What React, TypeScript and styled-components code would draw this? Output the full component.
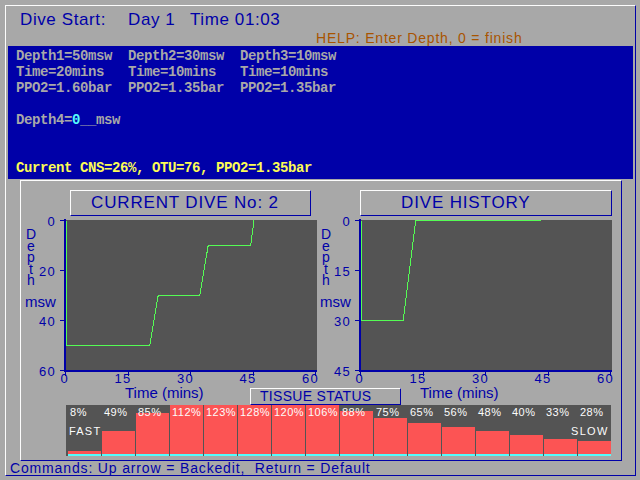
import styled, { createGlobalStyle } from "styled-components";

const BLUE = "#0000a8";
const GRAY = "#a8a8a8";
const DARK = "#545454";
const WHITE = "#fcfcfc";
const GREEN = "#54fc54";
const RED = "#fc5454";
const CYAN = "#54fcfc";
const YELLOW = "#fcfc54";
const ORANGE = "#a85400";

const GlobalStyle = createGlobalStyle`
  body {
    margin: 0;
    background: ${GRAY};
  }
`;

const Screen = styled.div`
  width: 640px;
  height: 480px;
  box-sizing: border-box;
  padding: 5px;
  background: ${GRAY};
  font-family: "Liberation Sans", Arial, sans-serif;
  overflow: hidden;
`;

const Frame = styled.div`
  width: 631px;
  height: 471px;
  box-sizing: border-box;
  border: 1px solid;
  border-color: ${WHITE} ${BLUE} ${BLUE} ${WHITE};
  display: flex;
  flex-direction: column;
`;

const Header = styled.div`
  height: 40px;
  box-sizing: border-box;
  padding-top: 4px;
  color: ${BLUE};
`;

const HeaderRow = styled.div`
  display: flex;
  padding-left: 14px;
  font-size: 17px;
  line-height: 20px;
  letter-spacing: 0.6px;
`;

const HeaderItem = styled.span<{ $w?: number }>`
  width: ${(p) => (p.$w ? `${p.$w}px` : "auto")};
`;

const Help = styled.div`
  padding-left: 310px;
  font-size: 14px;
  line-height: 16px;
  letter-spacing: 0.8px;
  color: ${ORANGE};
`;

const Console = styled.div`
  margin-left: 2px;
  width: 625px;
  height: 133px;
  box-sizing: border-box;
  padding: 2px 8px;
  background: ${BLUE};
  color: ${GRAY};
  font-family: "Liberation Mono", "DejaVu Sans Mono", monospace;
  font-weight: bold;
  font-size: 14px;
  letter-spacing: -0.4px;
  line-height: 16px;
  white-space: pre;
`;

const Line = styled.div<{ $color?: string }>`
  height: 16px;
  color: ${(p) => p.$color ?? "inherit"};
`;

const Cursor = styled.span`
  color: ${CYAN};
`;

const Panel = styled.div`
  margin: 1px 0 0 14px;
  width: 602px;
  height: 281px;
  box-sizing: border-box;
  border: 1px solid;
  border-color: ${WHITE} ${BLUE} ${BLUE} ${WHITE};
`;

const ChartsRow = styled.div`
  display: grid;
  grid-template-columns: 295px 305px;
`;

const ChartColumn = styled.div`
  display: flex;
  flex-direction: column;
`;

const TitleBox = styled.div<{ $left: number; $width: number; $pad: number }>`
  margin: 9px 0 0 ${(p) => p.$left}px;
  width: ${(p) => p.$width}px;
  height: 26px;
  box-sizing: border-box;
  border: 1px solid;
  border-color: ${WHITE} ${BLUE} ${BLUE} ${WHITE};
  padding-left: ${(p) => p.$pad}px;
  color: ${BLUE};
  font-size: 17px;
  line-height: 24px;
  letter-spacing: 0.85px;
  white-space: nowrap;
`;

const ChartSvg = styled.svg`
  display: block;
  overflow: visible;
  shape-rendering: crispEdges;
`;

const TickText = styled.text`
  font-family: "Liberation Sans", Arial, sans-serif;
  font-size: 13px;
  letter-spacing: 1.3px;
  fill: ${BLUE};
`;

const AxisTitle = styled.text`
  font-family: "Liberation Sans", Arial, sans-serif;
  font-size: 15px;
  fill: ${BLUE};
`;

const VerticalTitle = styled.text`
  font-family: "Liberation Sans", Arial, sans-serif;
  font-size: 14px;
  fill: ${BLUE};
  writing-mode: vertical-lr;
  text-orientation: upright;
  letter-spacing: -4.5px;
`;

const TissueBox = styled.div`
  margin-left: 229px;
  width: 151px;
  height: 17px;
  box-sizing: border-box;
  border: 1px solid;
  border-color: ${WHITE} ${BLUE} ${BLUE} ${WHITE};
  padding-left: 9px;
  color: ${BLUE};
  font-size: 14px;
  line-height: 15px;
  letter-spacing: 0.3px;
`;

const BarSvg = styled.svg`
  display: block;
  margin-left: 45px;
  shape-rendering: crispEdges;
`;

const BarText = styled.text<{ $spacing?: number }>`
  font-family: "Liberation Sans", Arial, sans-serif;
  font-size: 11px;
  letter-spacing: ${(p) => p.$spacing ?? 0.5}px;
  fill: ${WHITE};
`;

const Commands = styled.div`
  padding-left: 4px;
  color: ${BLUE};
  font-size: 14px;
  line-height: 14px;
  letter-spacing: 0.85px;
  white-space: pre;
`;

type Point = [number, number];

const PLOT_X = 45;
const PLOT_Y = 4;
const PLOT_W = 250;
const PLOT_H = 150;
const MINUTES = 60;

interface ChartProps {
  width: number;
  maxDepth: number;
  ticks: number[];
  profile: Point[];
}

const DepthChart = ({ width, maxDepth, ticks, profile }: ChartProps) => {
  const tx = (t: number) => PLOT_X + (t * PLOT_W) / MINUTES;
  const dy = (d: number) => PLOT_Y + (d * PLOT_H) / maxDepth;
  const points = profile
    .map(([t, d]) => `${tx(t) + 0.5},${dy(d) + 0.5}`)
    .join(" ");

  return (
    <ChartSvg width={width} height={172} viewBox={`0 0 ${width} 172`}>
      <rect x={PLOT_X} y={PLOT_Y} width={251} height={PLOT_H} fill={DARK} />
      <polyline points={points} fill="none" stroke={GREEN} strokeWidth={1} />
      <rect x={43} y={3} width={2} height={153} fill={BLUE} />
      <rect x={43} y={154} width={253} height={2} fill={BLUE} />
      {ticks.map((d) => (
        <g key={d}>
          <rect x={39} y={dy(d)} width={4} height={1} fill={BLUE} />
          <TickText x={35} y={dy(d) + 6} textAnchor="end">
            {d}
          </TickText>
        </g>
      ))}
      {[0, 15, 30, 45, 60].map((t) => (
        <g key={t}>
          <rect x={Math.round(tx(t)) - 1} y={156} width={1} height={4} fill={BLUE} />
          <TickText x={tx(t) + 3} y={167} textAnchor="end">
            {t}
          </TickText>
        </g>
      ))}
      <VerticalTitle x={10} y={10}>
        Depth
      </VerticalTitle>
      <AxisTitle x={4} y={91}>
        msw
      </AxisTitle>
      <AxisTitle x={104} y={182}>
        Time (mins)
      </AxisTitle>
    </ChartSvg>
  );
};

const TISSUES = [8, 49, 85, 112, 123, 128, 120, 106, 88, 75, 65, 56, 48, 40, 33, 28];

const TissueChart = () => (
  <BarSvg width={545} height={51} viewBox="0 0 545 51">
    <rect x={0} y={0} width={545} height={51} fill={DARK} />
    {TISSUES.map((pct, i) => {
      const x = 2 + i * 34;
      const top = Math.max(0, Math.round(50 - pct * 0.5));
      return (
        <g key={i}>
          <rect x={x} y={top} width={33} height={49 - top} fill={RED} />
          <rect x={x} y={49} width={33} height={2} fill={CYAN} />
        </g>
      );
    })}
    {TISSUES.map((pct, i) => (
      <BarText key={i} x={4 + i * 34} y={10.5}>
        {pct}%
      </BarText>
    ))}
    <BarText x={3} y={29.5} $spacing={1.2}>
      FAST
    </BarText>
    <BarText x={505} y={29.5} $spacing={1.3}>
      SLOW
    </BarText>
  </BarSvg>
);

const App = () => {
  return (
    <>
      <GlobalStyle />
      <Screen>
        <Frame>
          <Header>
            <HeaderRow>
              <HeaderItem $w={108}>Dive Start:</HeaderItem>
              <HeaderItem $w={62}>Day 1</HeaderItem>
              <HeaderItem>Time 01:03</HeaderItem>
            </HeaderRow>
            <Help>HELP: Enter Depth, 0 = finish</Help>
          </Header>
          <Console>
            <Line>Depth1=50msw  Depth2=30msw  Depth3=10msw</Line>
            <Line>Time=20mins   Time=10mins   Time=10mins</Line>
            <Line>PPO2=1.60bar  PPO2=1.35bar  PPO2=1.35bar</Line>
            <Line />
            <Line>
              Depth4=<Cursor>0</Cursor>__msw
            </Line>
            <Line />
            <Line />
            <Line $color={YELLOW}>Current CNS=26%, OTU=76, PPO2=1.35bar</Line>
          </Console>
          <Panel>
            <ChartsRow>
              <ChartColumn>
                <TitleBox $left={49} $width={241} $pad={20}>
                  CURRENT DIVE No: 2
                </TitleBox>
                <DepthChart
                  width={295}
                  maxDepth={60}
                  ticks={[0, 20, 40, 60]}
                  profile={[
                    [0, 0],
                    [0, 50],
                    [20, 50],
                    [22, 30],
                    [32, 30],
                    [34, 10],
                    [44.2, 10],
                    [45, 0],
                  ]}
                />
              </ChartColumn>
              <ChartColumn>
                <TitleBox $left={44} $width={252} $pad={40}>
                  DIVE HISTORY
                </TitleBox>
                <DepthChart
                  width={305}
                  maxDepth={45}
                  ticks={[0, 15, 30, 45]}
                  profile={[
                    [0, 0],
                    [0, 30],
                    [10, 30],
                    [13, 0],
                    [43, 0],
                  ]}
                />
              </ChartColumn>
            </ChartsRow>
            <TissueBox>TISSUE STATUS</TissueBox>
            <TissueChart />
          </Panel>
          <Commands>Commands: Up arrow = Backedit,  Return = Default</Commands>
        </Frame>
      </Screen>
    </>
  );
};

export default App;
